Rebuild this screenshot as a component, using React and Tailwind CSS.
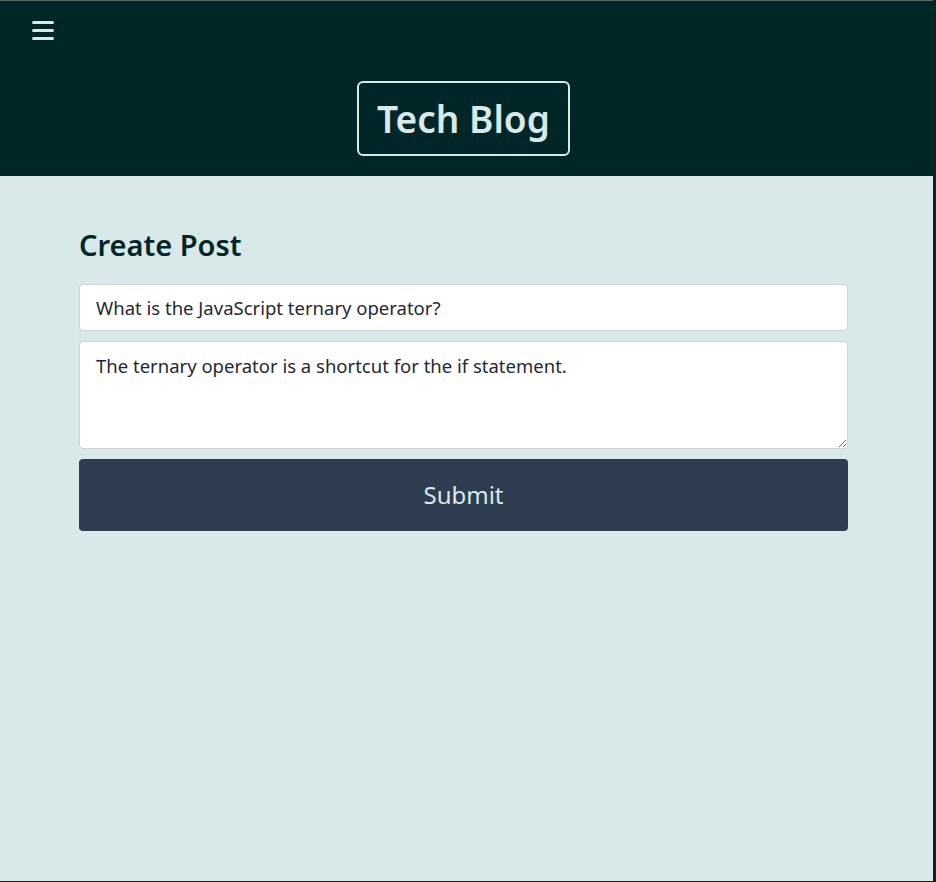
import React, { useState } from "react";

export default function App() {
  const [title, setTitle] = useState("What is the JavaScript ternary operator?");
  const [body, setBody] = useState(
    "The ternary operator is a shortcut for the if statement."
  );

  return (
    <div
      className="flex w-[936px] h-[882px] bg-[#1c1c1c]"
      style={{ fontFamily: '"Segoe UI", "Noto Sans", sans-serif' }}
    >
      <div className="flex flex-col w-[933px] h-[881px] bg-[#d9e8e8] border-t border-[#5c6464]">
        {/* Header */}
        <header className="bg-[#002627] h-[175px] flex flex-col">
          <div className="h-[80px] px-8 pt-[20px]">
            <button type="button" className="flex flex-col gap-[5px] w-[22px]">
              <span className="block h-[3px] w-[22px] rounded-full bg-[#d9e8e8]" />
              <span className="block h-[3px] w-[22px] rounded-full bg-[#d9e8e8]" />
              <span className="block h-[3px] w-[22px] rounded-full bg-[#d9e8e8]" />
            </button>
          </div>
          <div className="flex justify-center">
            <h1 className="ml-[-6px] h-[75px] px-[18px] flex items-center border-2 border-[#d9e8e8] rounded-md text-[37px] font-semibold text-[#d9e8e8] leading-none">
              Tech Blog
            </h1>
          </div>
        </header>

        {/* Main */}
        <main className="px-[79px] pr-[85px] pt-[51px]">
          <h2 className="text-[29px] font-semibold text-[#002627] leading-[36px] mb-[21px]">
            Create Post
          </h2>
          <form className="flex flex-col" onSubmit={(e) => e.preventDefault()}>
            <input
              value={title}
              onChange={(e) => setTitle(e.target.value)}
              className="h-[47px] w-full bg-white border border-[#ced4da] rounded-[4px] px-4 text-[18.5px] text-[#1f2933] outline-none"
            />
            <textarea
              value={body}
              onChange={(e) => setBody(e.target.value)}
              className="mt-[10px] h-[108px] w-full bg-white border border-[#ced4da] rounded-[4px] px-4 pt-[10px] text-[18.5px] leading-[1.5] text-[#1f2933] outline-none"
            />
            <button
              type="submit"
              className="mt-[10px] h-[72px] w-full bg-[#2e3d50] rounded-[4px] text-[24px] text-[#d9e8e8]"
            >
              Submit
            </button>
          </form>
        </main>
      </div>
    </div>
  );
}
